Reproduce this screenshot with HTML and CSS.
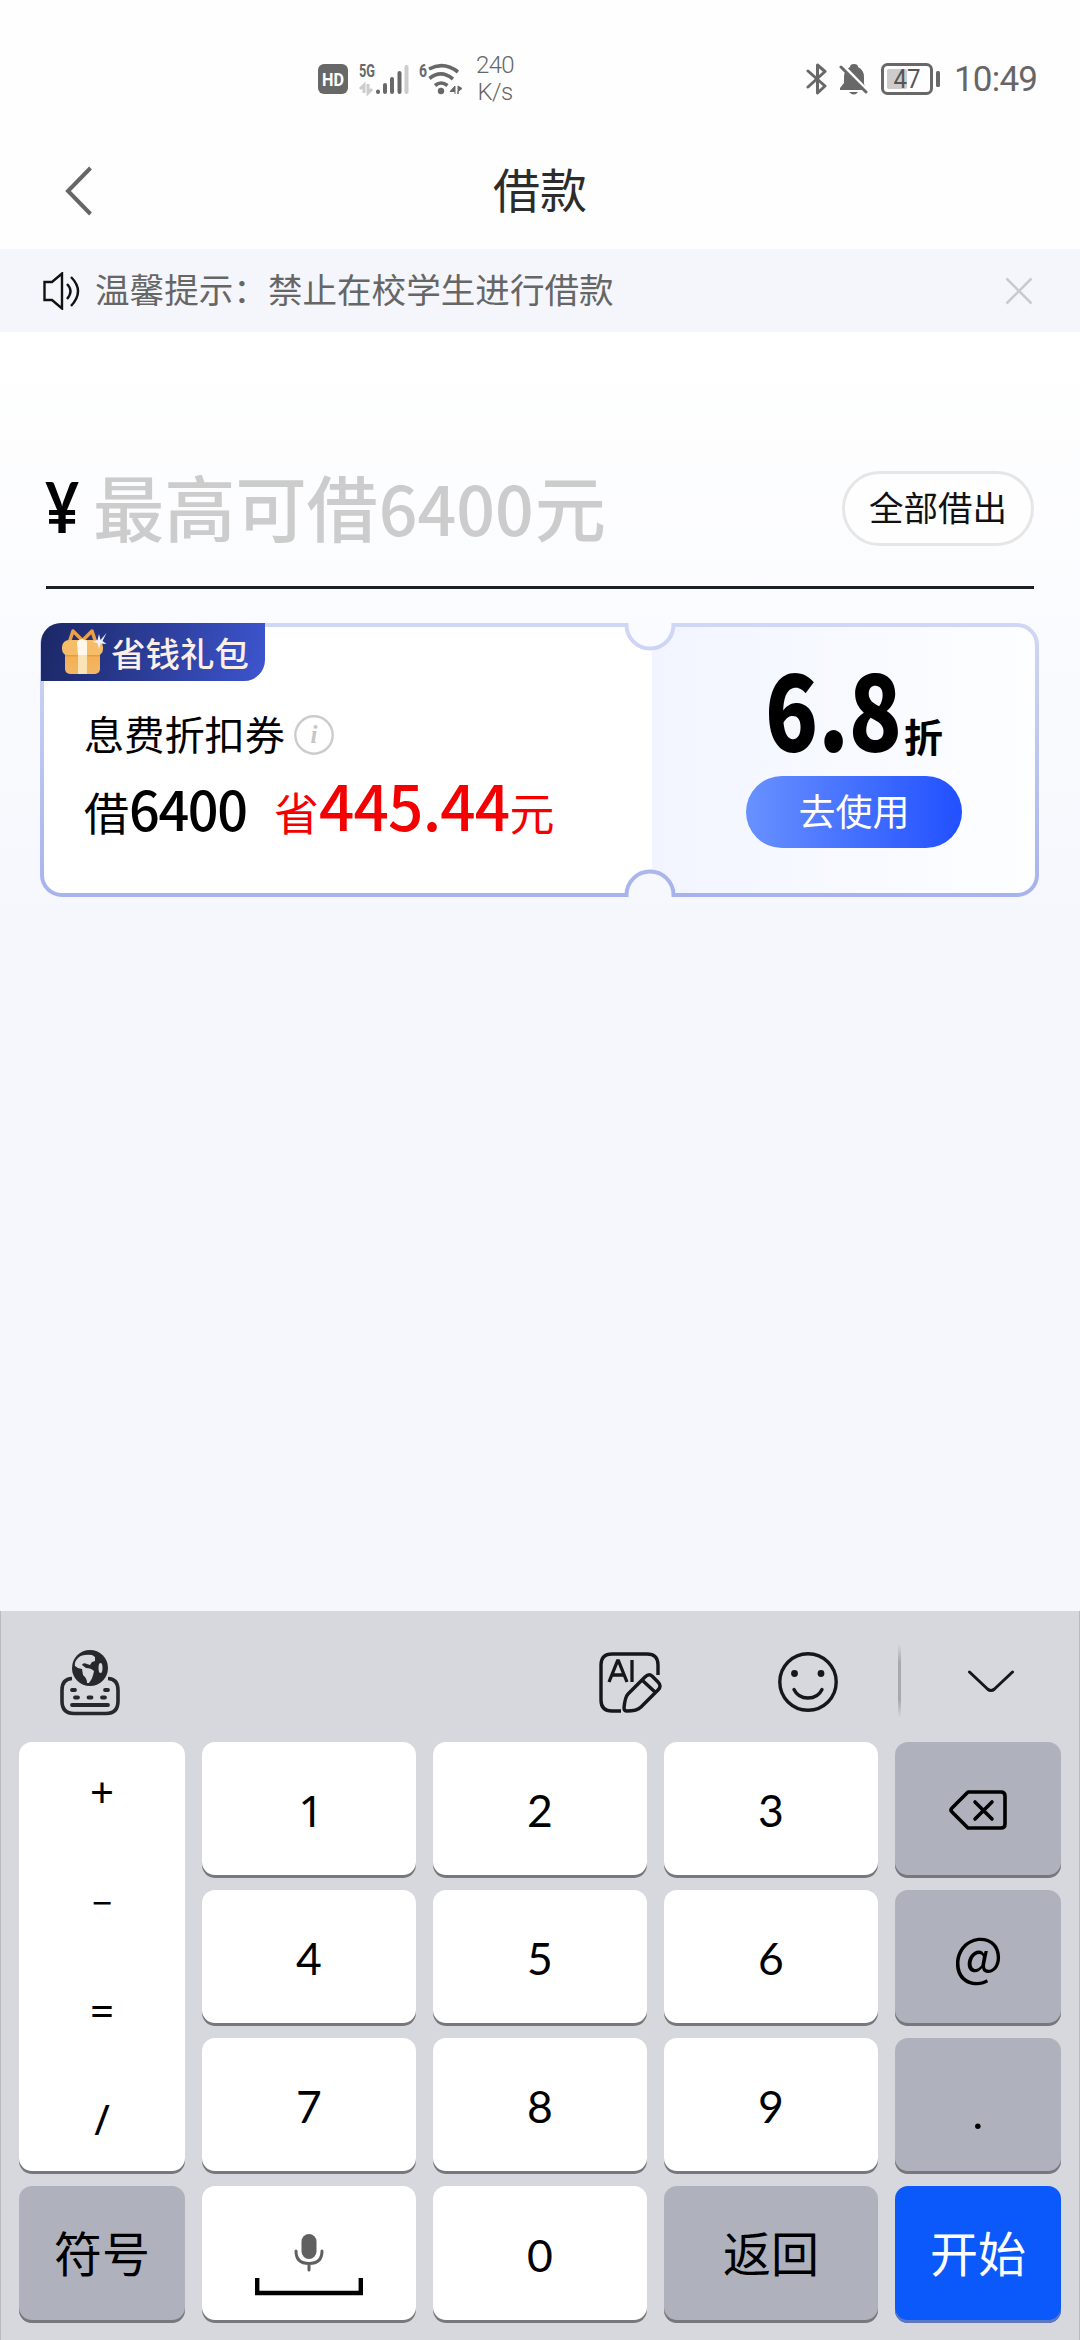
FILE: index.html
```html
<!DOCTYPE html>
<html lang="zh-CN">
<head>
<meta charset="utf-8">
<title>借款</title>
<link rel="stylesheet" href="styles.css">
</head>
<body>
<div class="screen">
  <header class="status">
    <svg class="hd" width="30" height="30" viewBox="0 0 30 30"><rect width="30" height="30" rx="6" fill="#686868"/><text x="15" y="21.500" text-anchor="middle" font-family="Roboto, sans-serif" font-weight="700" font-size="18" textLength="22" lengthAdjust="spacingAndGlyphs" fill="#fff">HD</text></svg>
    <svg class="cell" width="54" height="36" viewBox="-2 -3 54 36">
      <text x="0" y="14" font-family="Roboto, sans-serif" font-weight="700" font-size="18" textLength="16" lengthAdjust="spacingAndGlyphs" fill="#686868">5G</text>
      <path d="M5 30V22L1 26M9 21V30L13 26" fill="none" stroke="#ccc" stroke-width="3"/>
      <g stroke="#686868" stroke-width="4" stroke-linecap="round"><path d="M19 28.500v.5M26 22v7M33 16v13M40.500 10v19"/><path d="M47.500 4v25" stroke="#ccc"/></g>
    </svg>
    <svg class="wifi" width="48" height="36" viewBox="-2 -3 48 36">
      <text x="0" y="14" font-family="Roboto, sans-serif" font-weight="700" font-size="18" textLength="8" lengthAdjust="spacingAndGlyphs" fill="#686868">6</text>
      <g fill="none" stroke="#686868" stroke-width="3.600"><path d="M10 6Q25-2 39 9"/><path d="M10.500 15.500Q22 6 34 16"/><path d="M16 22.500Q22 17.500 28.500 22.500"/></g>
      <circle cx="22" cy="28" r="3.200" fill="#686868"/><path d="M36 31V23l-5 5.500h5M39 31V23l4 2.500-4 3z" fill="#686868" stroke="#686868"/>
    </svg>
    <div class="speed"><span>240</span><span>K/s</span></div>
    <svg class="bt" width="22" height="34" viewBox="0 0 22 34"><path d="M2 9l17 15-7.500 7V3L19 9.500 2 25" fill="none" stroke="#686868" stroke-width="3" stroke-linejoin="round" stroke-linecap="round"/></svg>
    <svg class="bell" width="30" height="33" viewBox="0 0 30 33"><path d="M15 1q4 0 4 3 6 3 6 10v7l2 5v1H1v-2l4-5v-6Q5 7 11 4q0-3 4-3z" fill="#686868"/><path d="M10 29h9q-4 5-9 0z" fill="#686868"/><path d="M2 1l28 29" stroke="#fff" stroke-width="4"/><path d="M2 4l25 25" stroke="#686868" stroke-width="3" stroke-linecap="round"/></svg>
    <svg class="battery" width="60" height="32" viewBox="0 0 60 32"><rect x="1.500" y="1.500" width="49" height="29" rx="5" fill="none" stroke="#686868" stroke-width="3"/><rect x="6" y="6" width="20" height="20" rx="2" fill="#ccc"/><text x="26" y="24.500" text-anchor="middle" font-family="Roboto, sans-serif" font-size="25" textLength="27" lengthAdjust="spacingAndGlyphs" fill="#555">47</text><rect x="55" y="8" width="4" height="16" rx="1.500" fill="#686868"/></svg>
    <span class="time">10:49</span>
  </header>

  <nav class="nav">
    <svg class="back" width="30" height="52" viewBox="0 0 30 52"><path d="M27.500 3L5 26l22.500 23" fill="none" stroke="#666" stroke-width="4"/></svg>
    <h1 class="title">借款</h1>
  </nav>

  <div class="notice">
    <svg width="38" height="38" viewBox="0 0 38 38" fill="none" stroke="#111" stroke-width="2.400"><path d="M1.500 10H9l10-8.500v35L9 28H1.500z"/><path d="M24 12q7 7 0 15M28 5q14 14 0 29"/></svg>
    <span class="notice-text">温馨提示：禁止在校学生进行借款</span>
    <svg class="close" width="28" height="28" viewBox="0 0 28 28"><path d="M1.500 1.500l25 25M26.500 1.500l-25 25" stroke="#c9cacf" stroke-width="2.500"/></svg>
  </div>

  <main class="main">
    <section class="amount">
      <span class="yen">¥</span>
      <span class="placeholder">最高可借<span class="placeholder-num">6400</span>元</span>
      <button class="all">全部借出</button>
    </section>

    <section class="coupon">
      <svg class="coupon-bg" width="999" height="274" viewBox="0 0 999 274">
        <defs>
          <linearGradient id="edge" x1="0" y1="0" x2="0" y2="1"><stop offset="0" stop-color="#d0d7f6"/><stop offset="1" stop-color="#a7b3ec"/></linearGradient>
          <linearGradient id="pane"><stop offset="0" stop-color="#f2f5ff"/><stop offset="1" stop-color="#fdfeff"/></linearGradient>
          <clipPath id="shape"><path d="M22 2H586.500a23.500 23.500 0 0 0 47 0H977a20 20 0 0 1 20 20V252a20 20 0 0 1-20 20H633.500a23.500 23.500 0 0 0-47 0H22a20 20 0 0 1-20-20V22A20 20 0 0 1 22 2z"/></clipPath>
        </defs>
        <g clip-path="url(#shape)"><rect width="612" height="274" fill="#fff"/><rect x="612" width="387" height="274" fill="url(#pane)"/></g>
        <path d="M22 2H586.500a23.500 23.500 0 0 0 47 0H977a20 20 0 0 1 20 20V252a20 20 0 0 1-20 20H633.500a23.500 23.500 0 0 0-47 0H22a20 20 0 0 1-20-20V22A20 20 0 0 1 22 2z" fill="none" stroke="url(#edge)" stroke-width="4"/>
      </svg>
      <div class="coupon-info">
        <div class="badge">
          <svg width="48" height="48" viewBox="0 0 48 48">
            <defs><linearGradient id="gold" x1="0" y1="0" x2="0" y2="1"><stop offset="0" stop-color="#f2ae4e"/><stop offset="1" stop-color="#f3b765"/></linearGradient></defs>
            <path d="M8 15L12 3l10 10M21 13L31 3l4 12" fill="none" stroke="#e9a04a" stroke-width="3.500" stroke-linejoin="round"/>
            <rect x="4" y="22" width="35" height="24" rx="5" fill="url(#gold)"/><rect x="1" y="12" width="41" height="16" rx="7" fill="#f6bd69"/><path d="M4 27h35v1.500H4z" fill="#e79b3c"/>
            <path d="M17 12h9v34h-9z" fill="#fbe3b8"/><path d="M16 14q5-6 10 0v13H17z" fill="#fff8ea"/>
            <path d="M38 6l1.500 6 6-7-4 8 4 3-6-.5L38 21l-1.500-6-5-1 5-2z" fill="#eaf0ff"/>
          </svg>
          <span>省钱礼包</span>
        </div>
        <div class="coupon-name"><span>息费折扣券</span>
          <svg width="40" height="40" viewBox="0 0 40 40"><circle cx="20" cy="20" r="18.700" fill="none" stroke="#ccc" stroke-width="2.400"/><text x="20" y="28" text-anchor="middle" font-family="Liberation Serif, serif" font-style="italic" font-weight="700" font-size="25" fill="#c6c6c6">i</text></svg>
        </div>
        <div class="saving"><span class="borrow">借<span class="borrow-num">6400</span></span><span class="save">省<span class="save-num">445.44</span>元</span></div>
      </div>
      <div class="coupon-action">
        <div class="rate"><span class="rate-num">6.8</span><span class="rate-unit">折</span></div>
        <button class="use">去使用</button>
      </div>
    </section>
  </main>

  <section class="keyboard">
    <div class="toolbar">
      <svg class="lang" width="60" height="68" viewBox="0 0 60 68">
        <path d="M12 29.500Q2 30 2 41v11q0 12.500 12 12.500h32q12 0 12-12.500V41Q58 30 48 29.500" fill="none" stroke="#26282b" stroke-width="3.600"/>
        <circle cx="30" cy="19" r="18" fill="#26282b"/>
        <path d="M32 6q-10-1-14 3-4 4-3 8 3 3 7 3l1 6q4 3 4 8h2q4-5 5-12-3-3-8-3l-4-3q1-3 5-1l3 1 2-3 3-1v-4z" fill="#d7d8de"/><ellipse cx="40.500" cy="19" rx="2" ry="5" fill="#d7d8de"/>
        <path d="M12 41h3M45 41h3M15 48.500h3M28.500 48.500h3M42 48.500h3M12 56h36" stroke="#26282b" stroke-width="3.800" stroke-linecap="round"/>
      </svg>
      <svg class="ai" width="64" height="62" viewBox="0 0 64 62" fill="none" stroke="#15171a" stroke-width="3.400">
        <path d="M59 23V13Q59 2 48 2H13Q2 2 2 13v35q0 11 11 11h9"/>
        <path d="M10 30L18.500 9h1L28 30M13 23h12M33 8v22" stroke-width="3.300"/>
        <path d="M46 25q4-4 7-1l6 6q4 4 0 8L42 55q-4 4-14 4-3 0-3-3 1-11 4-14zM43 28l13 12" stroke-linejoin="round"/>
      </svg>
      <svg class="emoji" width="60" height="60" viewBox="0 0 60 60"><circle cx="30" cy="30" r="28.200" fill="none" stroke="#15171a" stroke-width="3.400"/><circle cx="16.500" cy="21.500" r="3.400" fill="#15171a"/><circle cx="43" cy="21.500" r="3.400" fill="#15171a"/><path d="M16 37.500Q20 46 30 46T44 37.500" fill="none" stroke="#15171a" stroke-width="3.400" stroke-linecap="round"/></svg>
      <i class="divider"></i>
      <svg class="hide" width="46" height="24" viewBox="0 0 46 24"><path d="M1.500 2l18 17q3.500 3 7 0l18-17" fill="none" stroke="#15171a" stroke-width="3" stroke-linecap="round"/></svg>
    </div>
    <div class="keys">
      <div class="key ops"><span>+</span><span class="minus">−</span><span>=</span><span>/</span></div>
      <div class="key one">1</div><div class="key">2</div><div class="key">3</div>
      <div class="key gray"><svg width="58" height="40" viewBox="0 0 58 40"><path d="M19 2h33q4 0 4 4v28q0 4-4 4H19L3 22q-2-2 0-4z" fill="none" stroke="#000" stroke-width="3.600" stroke-linejoin="round"/><path d="M26 12l17 17M43 12L26 29" stroke="#000" stroke-width="3.600" stroke-linecap="round"/></svg></div>
      <div class="key">4</div><div class="key">5</div><div class="key">6</div>
      <div class="key gray at">@</div>
      <div class="key">7</div><div class="key">8</div><div class="key">9</div>
      <div class="key gray dot">.</div>
      <div class="key gray zh">符号</div>
      <div class="key space"><svg width="108" height="62" viewBox="0 0 108 62"><rect x="46.500" y="0" width="15" height="25" rx="7.500" fill="#606060"/><path d="M41 17q0 12.500 13 12.500T67 17M54 30v6" fill="none" stroke="#606060" stroke-width="3" stroke-linecap="round"/><path d="M2.200 44v15h103.600V44" fill="none" stroke="#000" stroke-width="4.400"/></svg></div>
      <div class="key">0</div>
      <div class="key gray zh">返回</div>
      <div class="key blue zh">开始</div>
    </div>
  </section>
</div>
</body>
</html>
```

FILE: styles.css
```css
* { box-sizing: border-box; }
body { margin: 0; }
svg { display: block; flex: none; }
button { padding: 0; border: 0; font: inherit; white-space: nowrap; }

.screen {
  width: 1080px;
  height: 2340px;
  display: flex;
  flex-direction: column;
  overflow: hidden;
  background: #fefefe;
  font-family: "Noto Sans CJK SC", sans-serif;
  color: #000;
}

/* status bar */
.status {
  height: 132px;
  padding: 26px 44px 0 318px;
  display: flex;
  align-items: center;
  color: #666;
  font-family: Roboto, sans-serif;
}
.cell { margin: -2px 0 0 9px; }
.wifi { margin: -2px 0 0 6px; }
.speed {
  width: 40px;
  margin-left: 10px;
  display: flex;
  flex-direction: column;
  align-items: center;
  font-size: 24px;
  line-height: 27px;
  font-weight: 300;
  letter-spacing: -0.6px;
}
.bt { margin-left: auto; margin-right: 11px; }
.bell { margin-right: 12px; }
.time {
  width: 82px;
  margin-left: 13px;
  padding-top: 2px;
  font-size: 35px;
  line-height: 40px;
  letter-spacing: -0.8px;
  white-space: nowrap;
}

/* page header */
.nav {
  height: 117px;
  padding: 0 63px;
  display: grid;
  grid-template-columns: 60px 1fr 60px;
  align-items: center;
}
.title {
  margin: 0;
  padding-bottom: 5px;
  text-align: center;
  font-size: 47px;
  line-height: 60px;
  font-weight: 400;
  color: #2c2c2c;
}
.notice {
  height: 83px;
  padding: 0 47px 0 43px;
  display: flex;
  align-items: center;
  background: #f5f6fc;
  color: #666;
}
.notice-text {
  margin-left: 14px;
  padding-bottom: 6px;
  font-size: 34.6px;
  line-height: 50px;
}
.close { margin-left: auto; }

/* amount and coupon */
.main {
  height: 1279px;
  padding: 139px 41px 0 40px;
  background: linear-gradient(#fff, #f5f7fd 620px);
}
.amount {
  height: 118px;
  margin: 0 5px 0 6px;
  display: flex;
  align-items: flex-start;
  border-bottom: 3px solid #1c2023;
}
.yen {
  width: 32px;
  font-family: Lato, sans-serif;
  font-size: 70px;
  line-height: 71px;
  font-weight: 700;
  display: flex;
  justify-content: center;
  transform: scaleX(0.84);
}
.placeholder {
  margin: -3px 0 0 15px;
  font-size: 71.2px;
  line-height: 75px;
  color: #ccc;
  font-weight: 500;
  white-space: nowrap;
}
.placeholder-num {
  margin: 0 1px;
  font-size: 68px;
}
.all {
  width: 192px;
  height: 75px;
  margin-left: auto;
  padding-bottom: 6px;
  border: 3px solid #e6e6e6;
  border-radius: 38px;
  background: #fefefe;
  color: #111;
  font-size: 34.5px;
}
.coupon {
  position: relative;
  height: 274px;
  margin-top: 34px;
  display: grid;
  grid-template-columns: 612px 387px;
}
.coupon-bg {
  position: absolute;
  inset: 0;
}
.coupon-info, .coupon-action { position: relative; }
.badge {
  width: 224px;
  height: 58px;
  margin-left: 1px;
  padding-left: 20px;
  display: flex;
  align-items: center;
  border-radius: 20px 0 21px 0;
  background: linear-gradient(100deg, #1b2765, #3d55cf);
  color: #fdeee8;
  font-size: 34.5px;
  line-height: 50px;
  font-weight: 500;
}
.badge span { margin-left: 2px; padding-bottom: 1px; white-space: nowrap; }
.coupon-name {
  height: 60px;
  margin: 24px 0 0 44px;
  display: flex;
  align-items: center;
  gap: 9px;
  font-size: 40.2px;
  line-height: 56px;
}
.coupon-name span { padding-bottom: 4px; }
.saving {
  height: 70px;
  margin: 9px 0 0 44px;
  display: flex;
  align-items: baseline;
  font-size: 45px;
  line-height: 61px;
  white-space: nowrap;
}
.borrow { width: 190px; }
.borrow-num {
  font-size: 54px;
  font-weight: 500;
  letter-spacing: -1.4px;
}
.save { color: #f40000; }
.save-num {
  font-size: 62px;
  font-weight: 500;
  letter-spacing: -0.8px;
}
.coupon-action {
  display: flex;
  flex-direction: column;
  align-items: center;
  padding: 27px 0 0 17px;
}
.rate {
  height: 126px;
  display: flex;
  align-items: baseline;
  line-height: 114px;
}
.rate-num {
  width: 139px;
  font-size: 104px;
  font-weight: 900;
  transform: scaleX(0.84);
  transform-origin: left;
  white-space: nowrap;
}
.rate-unit { font-size: 39px; font-weight: 700; }
.use {
  width: 216px;
  height: 72px;
  padding-bottom: 4px;
  border-radius: 36px;
  background: linear-gradient(90deg, #6891ff, #2150ff);
  color: #fff;
  font-size: 37px;
}

/* keyboard */
.keyboard {
  height: 729px;
  border: 1px solid #b9babf;
  border-width: 0 1px;
  background: #d7d8de;
}
.toolbar {
  height: 131px;
  padding: 38px 65px 0 59px;
  display: flex;
  align-items: flex-start;
}
.ai { margin: 3px 74px 0 auto; }
.emoji { margin: 3px 0 0 41px; }
.divider {
  width: 3px;
  height: 74px;
  margin: -5px 67px 0 60px;
  background: linear-gradient(transparent, #a8a9ae 25%, #a8a9ae 75%, transparent);
}
.hide { margin-top: 21px; }
.keys {
  padding: 0 18px;
  display: grid;
  grid-template-columns: 166px 214px 214px 214px 166px;
  grid-template-rows: repeat(3, 136px) 137px;
  gap: 12px 17px;
}
.key {
  display: flex;
  align-items: center;
  justify-content: center;
  border-radius: 13px;
  background: #fff;
  box-shadow: inset 0 -3px #77787c;
  font-family: Lato, sans-serif;
  font-size: 44.5px;
  line-height: 60px;
}
.one { padding: 0 0 1px 4px; font-family: "Noto Sans", sans-serif; }
.ops {
  grid-row: span 3;
  display: grid;
  grid-template-rows: repeat(4, 109px);
  align-content: start;
  justify-items: center;
  align-items: center;
  font-family: "Noto Sans", sans-serif;
  font-size: 42px;
}
.ops span { padding-bottom: 9px; }
.ops .minus { font-size: 36px; padding-bottom: 5px; }
.gray { background: #afb2bd; }
.blue { background: #0b58fb; color: #fff; box-shadow: inset 0 -3px #5d78bf; }
.at {
  padding-bottom: 11px;
  font-family: "Noto Sans CJK SC", sans-serif;
  font-size: 53px;
}
.dot { padding-top: 12px; font-size: 50px; font-family: Roboto, sans-serif; }
.zh {
  padding-bottom: 8px;
  font-family: "Noto Sans CJK SC", sans-serif;
  font-size: 48px;
}
.space { padding-top: 20px; }
```
